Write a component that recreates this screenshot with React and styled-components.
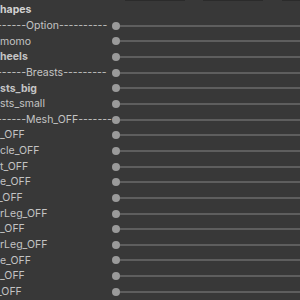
import React from 'react';
import styled, { createGlobalStyle } from 'styled-components';

const GlobalStyle = createGlobalStyle`
    html, body {
        margin: 0;
        padding: 0;
        background: #383838;
    }
`

const Panel = styled.div `
    width: 300px;
    height: 300px;
    overflow: hidden;
    background: #383838;
    font-family: Inter, "Liberation Sans", sans-serif;
    font-size: 10.5px;
    color: #c4c4c4;
    display: flex;
    flex-direction: column;
`
const FieldEdges = styled.div `
    height: 1px;
    display: grid;
    grid-template-columns: 125px 60px 18px 60px 19px 1fr;
`
const FieldEdge = styled.div `
    background: #2b2b2b;
`
const Title = styled.div `
    height: 17px;
    line-height: 17px;
    font-weight: 700;
    color: #d2d2d2;
    white-space: nowrap;
`
const Rows = styled.div `
    display: flex;
    flex-direction: column;
`
const Row = styled.div `
    height: 15.65px;
    display: grid;
    grid-template-columns: 112px 1fr;
    align-items: center;
`
const Label = styled.span `
    display: block;
    white-space: nowrap;
    line-height: 15.65px;
    font-weight: ${p => p.$bold ? 700 : 400};
    margin-left: ${p => p.$shift || 0}px;
`
const Slider = styled.div `
    position: relative;
    height: 8px;
    display: flex;
    align-items: center;
`
const Track = styled.div `
    flex: 1;
    height: 2px;
    margin-left: 4px;
    background: #5e5e5e;
`
const Knob = styled.div `
    position: absolute;
    left: 0;
    top: 0;
    width: 8px;
    height: 8px;
    border-radius: 50%;
    background: #9a9a9a;
`

const shapes = [
    { name: '------Option----------', shift: -3 },
    { name: 'momo' },
    { name: 'heels', bold: true },
    { name: '------Breasts---------', shift: -3 },
    { name: 'sts_big', bold: true },
    { name: 'sts_small' },
    { name: '------Mesh_OFF---------', shift: -3 },
    { name: '_OFF' },
    { name: 'cle_OFF' },
    { name: 't_OFF' },
    { name: 'e_OFF' },
    { name: '_OFF', shift: -2 },
    { name: 'rLeg_OFF' },
    { name: '_OFF' },
    { name: 'rLeg_OFF' },
    { name: 'e_OFF' },
    { name: '_OFF' },
    { name: '_OFF', shift: -3 },
];

const App = () => {
    return (
        <Panel>
            <GlobalStyle />
            <FieldEdges>
                <span />
                <FieldEdge />
                <span />
                <FieldEdge />
                <span />
                <FieldEdge />
            </FieldEdges>
            <Title>hapes</Title>
            <Rows>
                {shapes.map((s, i) => (
                    <Row key={i}>
                        <Label $bold={s.bold} $shift={s.shift}>{s.name}</Label>
                        <Slider>
                            <Knob />
                            <Track />
                        </Slider>
                    </Row>
                ))}
            </Rows>
        </Panel>
    );
};

export default App;
